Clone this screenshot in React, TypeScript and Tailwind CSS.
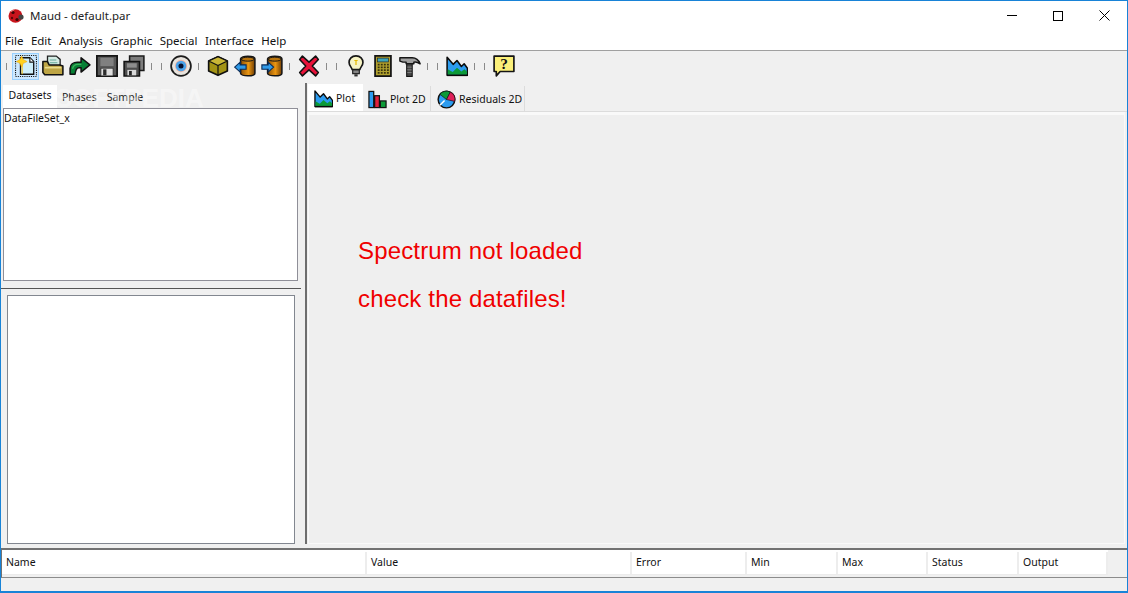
import React from "react";

const K = "#111";
const Ic = ({ children, s = 22 }: { children: React.ReactNode; s?: number }) => (
  <svg width={s} height={s} viewBox="0 0 20 20" className="block">{children}</svg>
);

const New = () => (
  <Ic s={22}>
    <rect x="0.5" y="0.5" width="19" height="19" fill="none" stroke="#111" strokeWidth="1" strokeDasharray="1 1" />
    <path d="M5 2.500h8.500l3.500 3.500v11.500H5z" fill="#cfeffa" stroke={K} strokeWidth="1.200" />
    <path d="M13.500 2.500v4H17" fill="#fff" stroke={K} strokeWidth="1" />
    <path d="M6.500 8v9.500" stroke="#f3c21e" strokeWidth="1" />
    <path d="M6 .8l1.500 3.400L11 6 7.500 7.600 6 11 4.500 7.600 1.200 6l3.300-1.800z" fill="#ffd21f" stroke="#eda60c" strokeWidth="0.5" />
  </Ic>
);
const Open = () => (
  <Ic>
    <path d="M5 1h8l3.500 3v9H5z" fill="#d5ebe4" stroke="#222" strokeWidth="1.200" />
    <path d="M7 4.500h6M7 7h7" stroke="#6a9" strokeWidth="1" />
    <path d="M.8 6H5l1.500 3H16l3 1v8H2.500L.8 16z" fill="#bea544" stroke="#111" strokeWidth="1.400" strokeLinejoin="round" />
    <path d="M2.500 11.500h15" stroke="#ebdc8c" strokeWidth="1.500" />
  </Ic>
);
const Redo = () => (
  <Ic>
    <path d="M1 17.500V12c0-3.500 3-5.500 6.500-5.500H11V2.500l8 6.500-8 6.500v-4H9C7.500 11.500 6 13 5.500 17.500z" fill="#078035" stroke={K} strokeWidth="1.400" strokeLinejoin="round" />
    <path d="M3.200 12.500c.5-2.500 2.500-4 5-4h3" fill="none" stroke="#3fb05c" strokeWidth="1.200" />
  </Ic>
);
const Save = () => (
  <Ic>
    <path d="M.8.800h18.400v18.400H.8z" fill="#595959" stroke="#161616" strokeWidth="1.600" />
    <rect x="4" y="2.500" width="12" height="7.500" fill="#808080" />
    <rect x="4.500" y="12" width="11" height="7" fill="#dedede" stroke="#222" strokeWidth="0.6" />
    <rect x="6.500" y="13" width="3" height="5.500" fill="#2c2c2c" />
  </Ic>
);
const SaveAll = () => (
  <Ic>
    <path d="M6 1h13v13H6z" fill="#7c7c7c" stroke="#1a1a1a" strokeWidth="1.400" />
    <path d="M1 6h14v13H1z" fill="#4e4e4e" stroke="#111" strokeWidth="1.400" />
    <rect x="3.500" y="7.500" width="9" height="4" fill="#8e8e8e" />
    <rect x="4" y="13.500" width="8" height="5" fill="#d8d8d8" />
    <rect x="5.500" y="14.500" width="2.500" height="4" fill="#222" />
  </Ic>
);
const Eye = () => (
  <Ic>
    <circle cx="10" cy="10" r="9" fill="#e8e4de" stroke="#1c1c1c" strokeWidth="1.600" />
    <circle cx="10" cy="10" r="5.600" fill="#f0b6a6" />
    <circle cx="10" cy="10" r="4.800" fill="#4ba3ea" />
    <circle cx="10" cy="10" r="2.300" fill="#07102e" />
  </Ic>
);
const Cube = () => (
  <Ic>
    <path d="M10 1.500l8.500 4v9L10 18.500l-8.500-4v-9z" fill="#a39315" stroke="#111" strokeWidth="1.500" strokeLinejoin="round" />
    <path d="M10 1.500l8.500 4-8.500 4-8.500-4z" fill="#c9b636" stroke="#111" strokeWidth="1.100" strokeLinejoin="round" />
    <path d="M10 9.500v9" stroke="#111" strokeWidth="1.100" />
  </Ic>
);
const Cyl = ({ dir }: { dir: "l" | "r" }) => (
  <Ic>
    <defs>
      <linearGradient id={"cy" + dir} x1="0" x2="1" y1="0" y2="0">
        <stop offset="0" stopColor="#8c4f05" />
        <stop offset="0.55" stopColor="#ea9612" />
        <stop offset="1" stopColor="#703d04" />
      </linearGradient>
    </defs>
    <path d="M6 3.500c0-3.200 13-3.200 13 0v13c0 3.200-13 3.200-13 0z" fill={"url(#cy" + dir + ")"} stroke="#161616" strokeWidth="1.400" />
    <ellipse cx="12.500" cy="3.800" rx="5.800" ry="1.800" fill="#b8740e" stroke="#161616" strokeWidth="0.9" />
    {dir === "l" ? (
      <path d="M.6 11l5-4.500V9H11v4H5.600v2.500z" fill="#2f9ae8" stroke="#0a2a55" strokeWidth="1" />
    ) : (
      <path d="M11.500 11l-5-4.500V9H.8v4h5.700v2.500z" fill="#2f9ae8" stroke="#0a2a55" strokeWidth="1" />
    )}
  </Ic>
);
const XIcon = () => (
  <Ic>
    <path d="M1.500 4l2.500-3 6 5.500L16 1l2.500 3-5.500 6 5.500 6-2.500 3-6-5.500L4 19l-2.500-3L7 10z" fill="#e8133a" stroke="#111" strokeWidth="1.400" strokeLinejoin="round" />
  </Ic>
);
const Bulb = () => (
  <Ic>
    <path d="M10 .8c-4 0-6.300 2.800-6.300 6 0 2.800 2.100 3.900 2.800 6.400h7c.7-2.500 2.800-3.600 2.800-6.400 0-3.200-2.300-6-6.300-6z" fill="#f7f4c4" stroke="#161616" strokeWidth="1.500" />
    <path d="M8.500 5h3M10 5v4" stroke="#e5b800" strokeWidth="1.100" />
    <rect x="7" y="13.500" width="6" height="3.500" fill="#858585" stroke="#161616" strokeWidth="1" />
    <path d="M8.500 17.500h3v2h-3z" fill="#333" />
  </Ic>
);
const Calc = () => (
  <Ic>
    <rect x="2.800" y="0.800" width="14.400" height="18.400" fill="#b0a02e" stroke="#141414" strokeWidth="1.600" />
    <rect x="5" y="2.800" width="10" height="3.500" fill="#3ca4b8" stroke="#222" strokeWidth="0.6" />
    <g fill="#35300e">
      {[8, 10.500, 13, 15.500].map((y) => [5.200, 8, 10.800, 13.600].map((x) => <rect key={x + "-" + y} x={x} y={y} width="1.700" height="1.500" />))}
    </g>
  </Ic>
);
const Hammer = () => (
  <Ic>
    <path d="M.8 2.500H12c3 0 5.700 1.500 7.200 5.500C17 6.500 15 6 13.500 6.500v1.500H6.500V6.500H3.500L.8 5.500z" fill="#a0a0a0" stroke="#141414" strokeWidth="1.300" strokeLinejoin="round" />
    <rect x="7" y="8" width="5" height="11.500" fill="#454545" stroke="#141414" strokeWidth="1" />
    <path d="M7.500 11h4M7.500 13.500h4M7.500 16h4" stroke="#999" strokeWidth="0.7" />
  </Ic>
);
const Chart = ({ s = 22 }: { s?: number }) => (
  <Ic s={s}>
    <path d="M1 18.500V2l5.500 6.500L10 5l4 5.500L16.500 8l3 4v6.500z" fill="#2c9cf0" stroke="#0a0a0a" strokeWidth="1.400" strokeLinejoin="round" />
    <path d="M1.600 18v-5l4.500 2.500L10 11.500l4 3.500 2.700-2 2.300 2V18z" fill="#0c9a38" />
    <path d="M1 18.500h18.500" stroke="#0a0a0a" strokeWidth="1.400" />
  </Ic>
);
const Bars = () => (
  <Ic s={19}>
    <rect x="1" y="1.500" width="5" height="17" fill="#2c9cf0" stroke="#111" strokeWidth="1.300" />
    <rect x="7" y="6" width="5" height="12.500" fill="#e0203c" stroke="#111" strokeWidth="1.300" />
    <rect x="13" y="11.500" width="6" height="7" fill="#0c9a38" stroke="#111" strokeWidth="1.300" />
  </Ic>
);
const Pie = () => (
  <Ic s={19}>
    <circle cx="10" cy="10" r="8.800" fill="#2c9cf0" stroke="#111" strokeWidth="1.500" />
    <path d="M10 10L3 4.500A8.800 8.800 0 0 1 14 2.200z" fill="#0c9a38" stroke="#111" strokeWidth="0.7" />
    <path d="M10 10l4-7.800a8.800 8.800 0 0 1 4.600 9.800z" fill="#e0205a" stroke="#111" strokeWidth="0.7" />
    <path d="M3 16l5-5" stroke="#fff" strokeWidth="1.600" />
  </Ic>
);
const Help = () => (
  <Ic>
    <path d="M1 1h18v14H6.500L3 19v-4H1z" fill="#fbf07a" stroke="#141414" strokeWidth="1.500" strokeLinejoin="round" />
    <text x="10" y="12.500" textAnchor="middle" fontSize="14" fontWeight="700" fontFamily="'Liberation Serif', serif" fill="#111">?</text>
  </Ic>
);
const Bug = () => (
  <svg width="16" height="16" viewBox="0 0 16 16" className="block">
    <ellipse cx="7.500" cy="8" rx="7" ry="6.800" fill="#c8141c" />
    <circle cx="13" cy="9" r="2.600" fill="#444" />
    <circle cx="5" cy="4.500" r="1.600" fill="#3a0808" />
    <circle cx="9" cy="11.500" r="1.600" fill="#3a0808" />
    <circle cx="4" cy="10" r="1.200" fill="#5a0808" />
    <path d="M3 3.500l3-1.500" stroke="#f08080" strokeWidth="1" />
  </svg>
);

const Slot = ({ children, active }: { children: React.ReactNode; active?: boolean }) => (
  <div className={"flex h-[27px] w-[27px] items-center justify-center " + (active ? "border border-[#99d1ff] bg-[#cce8ff]" : "")}>
    {children}
  </div>
);
const Sep = () => (
  <div className="flex h-[27px] w-[10px] items-center pl-[4px]">
    <div className="h-[7px] w-px bg-[#8a8a8a]" />
  </div>
);

const columns: [string, string][] = [
  ["Name", "w-[365px]"],
  ["Value", "w-[265px]"],
  ["Error", "w-[115px]"],
  ["Min", "w-[91px]"],
  ["Max", "w-[90px]"],
  ["Status", "w-[91px]"],
  ["Output", "w-[89px]"],
];

export default function App() {
  return (
    <div className="relative flex h-[593px] w-[1128px] flex-col overflow-hidden border-x border-t border-b-2 border-[#1883d7] bg-[#f0f0f0] font-['Noto_Sans',sans-serif] text-[#111]">
      <div className="flex h-[29px] shrink-0 items-center bg-white">
        <div className="ml-[7px] mr-[6px]"><Bug /></div>
        <span className="text-[11.5px] text-[#222]">Maud - default.par</span>
        <div className="ml-auto flex h-full items-center">
          <div className="flex w-[46px] justify-center"><div className="h-px w-[10px] bg-black" /></div>
          <div className="flex w-[46px] justify-center"><div className="h-[10px] w-[10px] border border-black" /></div>
          <div className="flex w-[46px] justify-center">
            <svg width="11" height="11" viewBox="0 0 11 11"><path d="M.5.500l10 10M10.500.500l-10 10" stroke="#000" strokeWidth="1" /></svg>
          </div>
        </div>
      </div>
      <div className="flex h-[20px] shrink-0 items-center gap-[7.5px] bg-white pl-[4px] pt-[2px] text-[11.5px] text-[#111]">
        {["File", "Edit", "Analysis", "Graphic", "Special", "Interface", "Help"].map((m) => (
          <span key={m}>{m}</span>
        ))}
      </div>
      <div className="h-px shrink-0 bg-[#a0a0a0]" />

      <div className="flex h-[31px] shrink-0 items-center pb-[1px] pl-[5px]">
        <div className="mr-[5px] h-[7px] w-px bg-[#8a8a8a]" />
        <Slot active><New /></Slot>
        <Slot><Open /></Slot>
        <Slot><Redo /></Slot>
        <Slot><Save /></Slot>
        <Slot><SaveAll /></Slot>
        <Sep /><Sep />
        <Slot><Eye /></Slot>
        <Sep />
        <Slot><Cube /></Slot>
        <Slot><Cyl dir="l" /></Slot>
        <Slot><Cyl dir="r" /></Slot>
        <Sep />
        <Slot><XIcon /></Slot>
        <Sep /><Sep />
        <Slot><Bulb /></Slot>
        <Slot><Calc /></Slot>
        <Slot><Hammer /></Slot>
        <Sep /><Sep />
        <Slot><Chart /></Slot>
        <Sep /><Sep />
        <Slot><Help /></Slot>
      </div>

      <div className="flex min-h-0 flex-1">
        <div className="flex w-[304px] shrink-0 flex-col">
          <div className="flex h-[26px] shrink-0 items-end pl-[2px] text-[10.5px]">
            <div className="flex h-[23px] w-[54px] items-start justify-center bg-white pt-[3px]">Datasets</div>
            <div className="ml-[5px] flex h-[23px] items-center gap-[10px] pt-[3px] text-[#222]">
              <span>Phases</span>
              <span>Sample</span>
            </div>
          </div>
          <div className="ml-[2px] h-[173px] w-[295px] shrink-0 border border-[#8f8f98] bg-white pt-[1px] text-[10.5px] leading-[16px]">DataFileSet_x</div>
          <div className="mt-[7px] h-px w-[300px] shrink-0 bg-[#555]" />
          <div className="mt-[6px] ml-[6px] h-[249px] w-[288px] shrink-0 border border-[#828790] bg-white" />
        </div>
        <div className="mb-[4px] mt-[1px] w-[2px] shrink-0 bg-[#6e6e6e]" />
        <div className="flex min-w-0 flex-1 flex-col pb-[4px]">
          <div className="flex h-[30px] shrink-0 items-end border-b border-[#dcdcdc] pl-[1px] text-[10.5px]">
            <div className="flex h-[27px] w-[55px] items-center gap-[3px] whitespace-nowrap bg-white pl-[6px] pt-[2px]"><Chart s={19} /><span>Plot</span></div>
            <div className="flex h-[25px] w-[68px] items-center gap-[3px] whitespace-nowrap border-r border-[#dcdcdc] bg-[#f0f0f0] pl-[5px] pt-[2px]"><Bars /><span>Plot 2D</span></div>
            <div className="flex h-[25px] w-[94px] items-center gap-[3px] whitespace-nowrap border-r border-[#dcdcdc] bg-[#f0f0f0] pl-[6px] pt-[2px]"><Pie /><span>Residuals 2D</span></div>
          </div>
          <div className="mr-[2px] ml-[1px] min-h-0 flex-1 border-t-[3px] border-r border-b border-l border-[#f9f9f9] bg-[#efefef] pt-[112px] pl-[49px] font-['Liberation_Sans',sans-serif] text-[24px] leading-[48px] tracking-[0.16px] text-[#f00000]">
            <div>Spectrum not loaded</div>
            <div>check the datafiles!</div>
          </div>
        </div>
      </div>

      <div className="h-[30px] shrink-0 border-t-2 border-b border-l border-[#727272] border-b-[#8c8c8c] bg-[#f0f0f0]">
        <div className="flex h-[25px] w-[1106px] border-b border-[#ececec] bg-white pt-[2px] text-[10.5px]">
          {columns.map(([c, w]) => (
            <div key={c} className={"flex h-full items-center border-r-2 border-[#ededed] pl-[4px] " + w}>{c}</div>
          ))}
        </div>
      </div>
      <div className="h-[13px] shrink-0 bg-[#f0f0f0]" />

      <div className="pointer-events-none absolute left-[54px] top-[82px] font-['Liberation_Sans',sans-serif] text-[26px] font-bold leading-[30px] text-white/40">SOFTPEDIA</div>
    </div>
  );
}
